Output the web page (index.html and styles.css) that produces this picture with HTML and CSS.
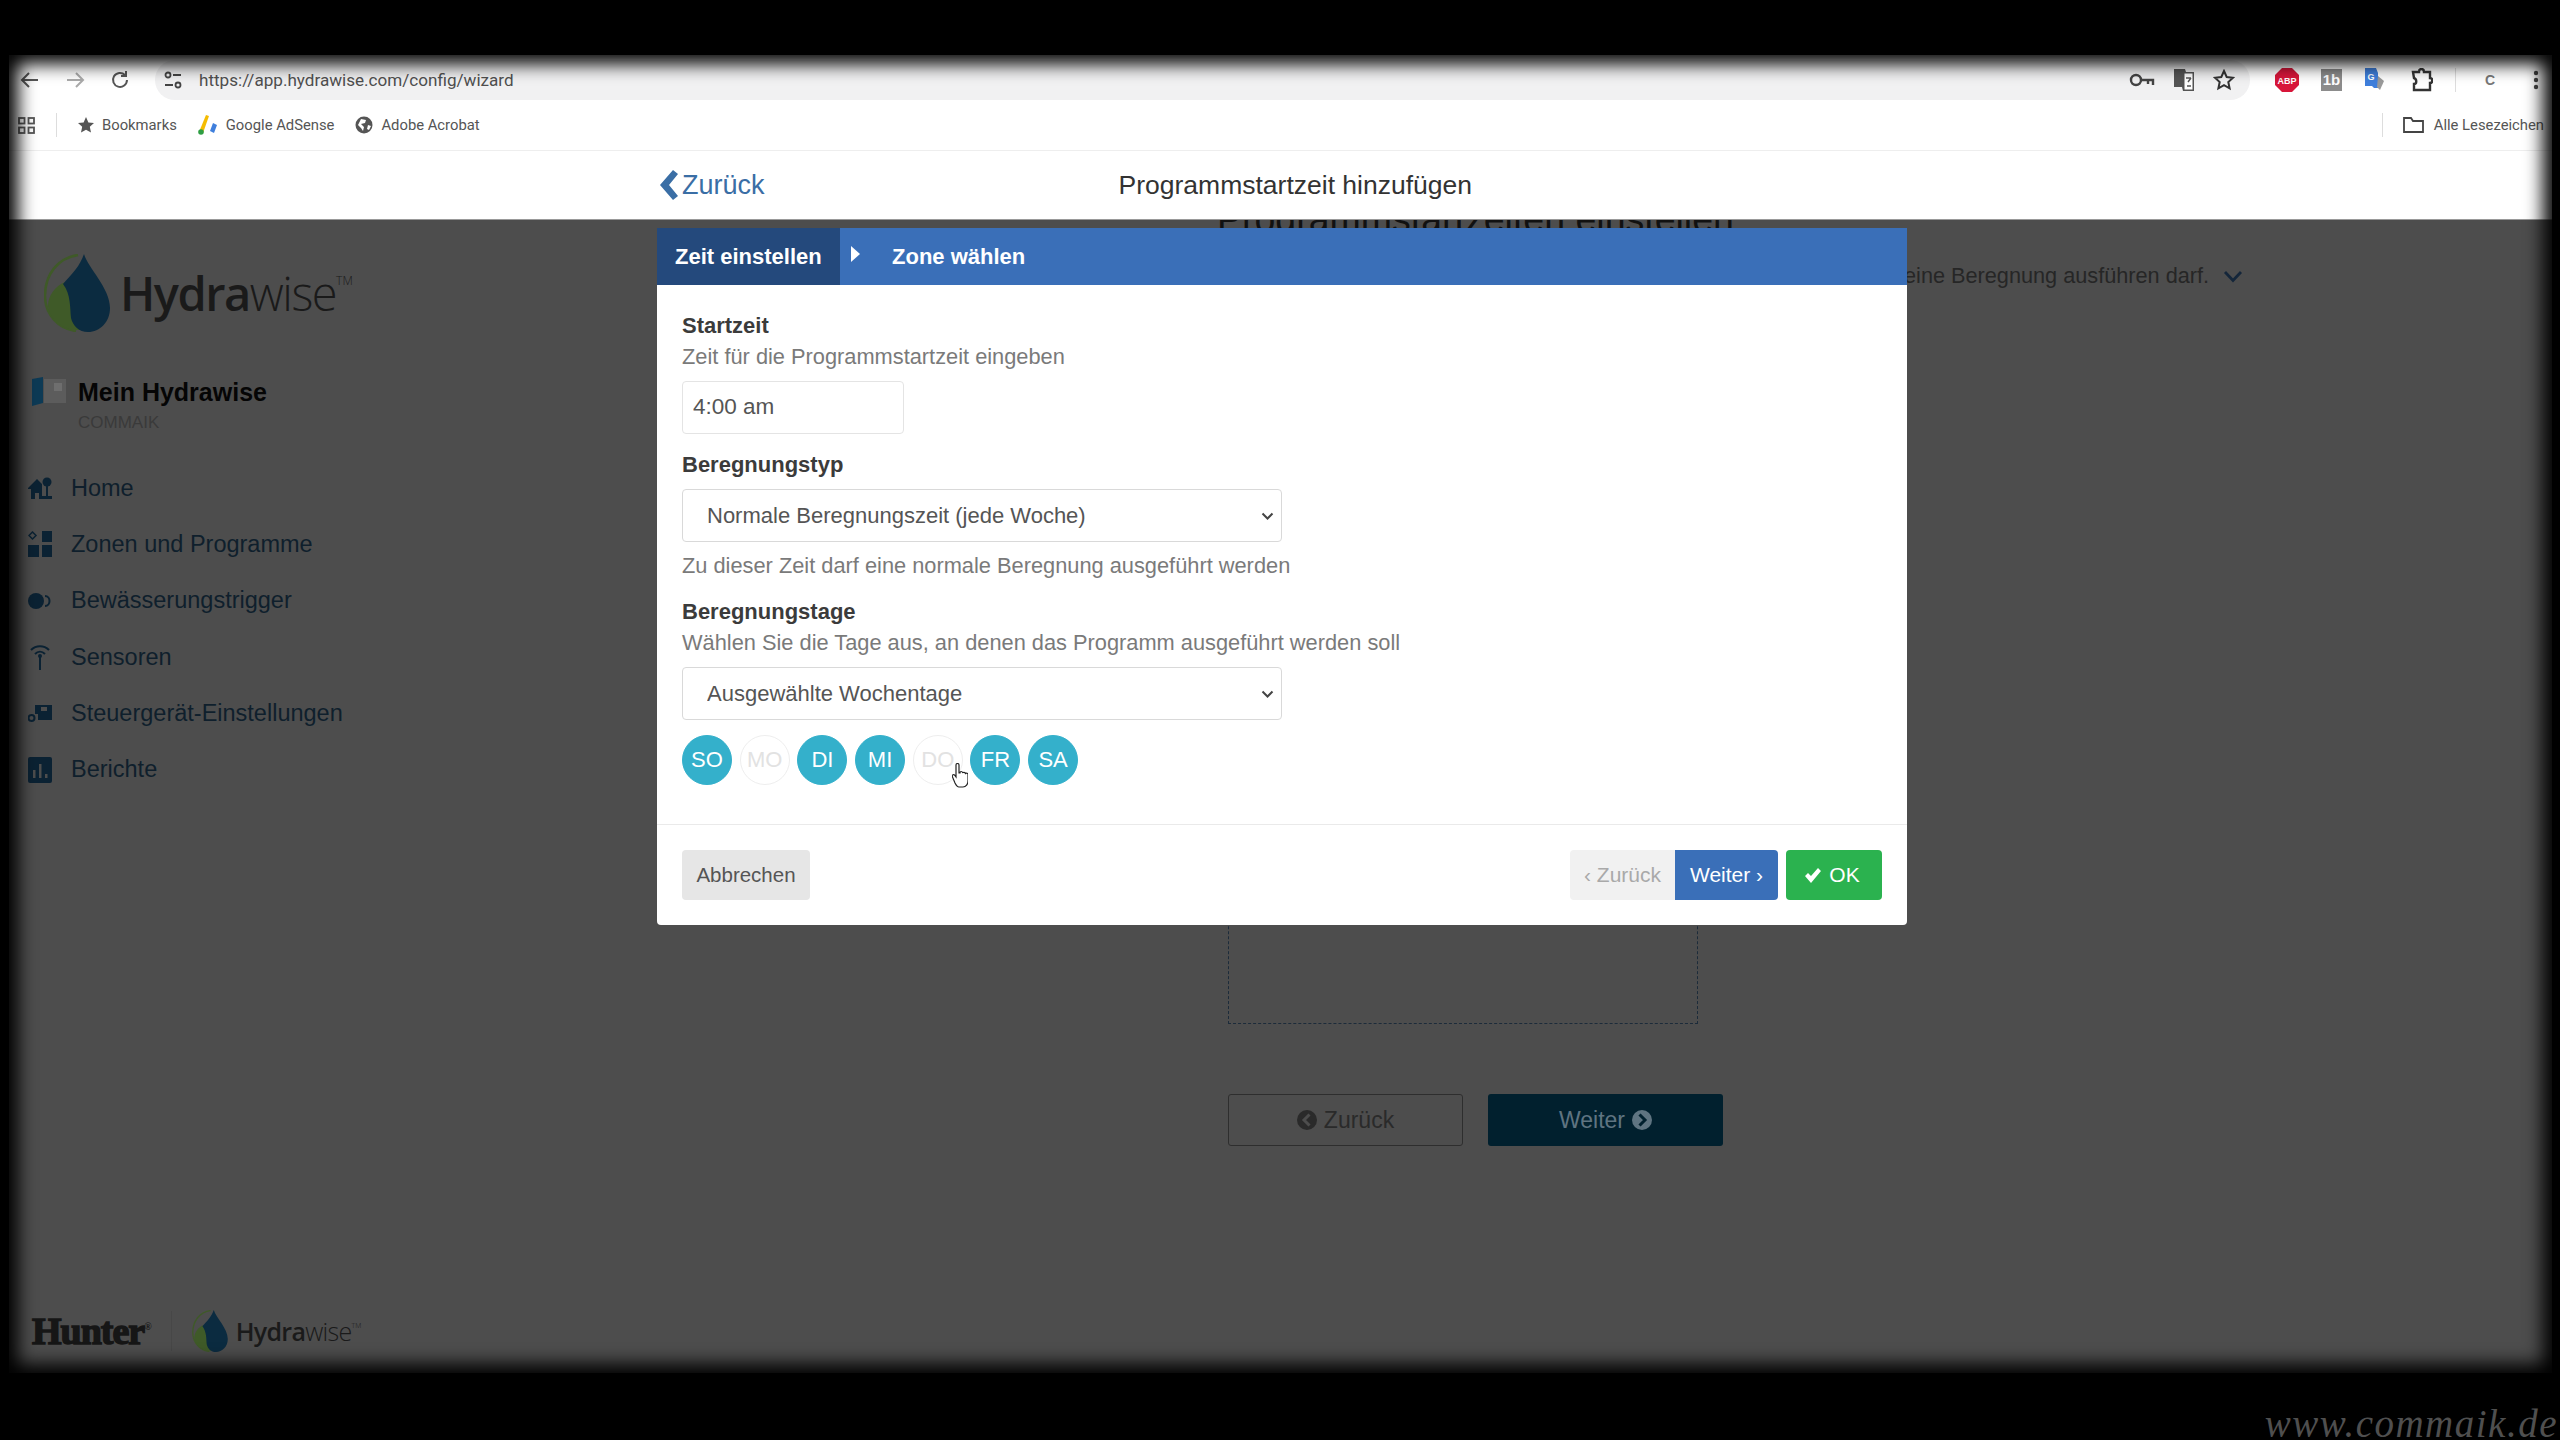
FILE: index.html
```html
<!DOCTYPE html>
<html lang="de">
<head>
    <meta charset="UTF-8">
    <title>Programmstartzeit hinzufügen</title>
    <link rel="stylesheet" href="styles.css">
</head>
<body>
<svg class="defs" width="0" height="0">
    <symbol id="drop" viewBox="0 0 66 78">
        <path d="M34 1C14 4 1 20 1 42c0 18 13 33 31 35" fill="none" stroke="#3f5a28" stroke-width="2.5"/>
        <path d="M4 52c0-10 7-20 17-24 5 8 5 18 6 26 1 9 3 16 9 22C20 76 6 68 4 52z" fill="#3f5a28"/>
        <path d="M40 0c4 14 26 34 26 54 0 14-10 24-22 24-9 0-15-6-17-14-1-9 0-24-8-34C28 20 36 12 40 0z" fill="#0b2b40"/>
    </symbol>
</svg>

<div class="stage">
    <div class="screen">

        <!-- Browser toolbar -->
        <div class="toolbar">
            <div class="nav-btns">
                <svg width="22" height="22" viewBox="0 0 22 22"><path d="M19 11H4M10 4l-7 7 7 7" fill="none" stroke="#555" stroke-width="2"/></svg>
                <svg width="22" height="22" viewBox="0 0 22 22"><path d="M3 11h15M12 4l7 7-7 7" fill="none" stroke="#aaa" stroke-width="2"/></svg>
                <svg width="22" height="22" viewBox="0 0 22 22"><path d="M18 11a7 7 0 1 1-2-5M17 2v5h-5" fill="none" stroke="#555" stroke-width="2"/></svg>
            </div>
            <div class="omnibox">
                <svg width="20" height="20" viewBox="0 0 20 20"><circle cx="5" cy="5" r="2.5" fill="none" stroke="#444" stroke-width="1.8"/><path d="M10 5h8M2 15h8" stroke="#444" stroke-width="2"/><circle cx="15" cy="15" r="2.5" fill="none" stroke="#444" stroke-width="1.8"/></svg>
                <span class="url">https://app.hydrawise.com/config/wizard</span>
                <div class="omni-icons">
                    <svg width="26" height="16" viewBox="0 0 26 16"><circle cx="7" cy="8" r="5" fill="none" stroke="#444" stroke-width="2.4"/><path d="M12 8h12v5M19 8v4" fill="none" stroke="#444" stroke-width="2.4"/></svg>
                    <svg width="22" height="24" viewBox="0 0 22 24"><path d="M1 1h11l1 3h8v19H10l-1-4H1z" fill="#555"/><path d="M11 5h9v17h-9z" fill="#fff" stroke="#555"/><path d="M13 10h5M15 14l3-4M14 18h4" stroke="#555" stroke-width="1.4"/></svg>
                    <svg width="22" height="22" viewBox="0 0 22 22"><path d="M11 2l2.700 6 6.300.7-4.700 4.300 1.300 6.400L11 16.200 5.400 19.400l1.300-6.400L2 8.700 8.300 8z" fill="none" stroke="#333" stroke-width="2"/></svg>
                </div>
            </div>
            <div class="ext-icons">
                <svg class="ext-abp" width="24" height="24" viewBox="0 0 24 24"><path d="M7 0h10l7 7v10l-7 7H7l-7-7V7z" fill="#d8163a"/><text x="12" y="16" text-anchor="middle" class="ext-text">ABP</text></svg>
                <svg class="ext-fb" width="21" height="22" viewBox="0 0 21 22"><path d="M0 0h21v22H0z" fill="#8c8c8c"/><text x="10.500" y="16" text-anchor="middle" class="ext-text ext-text-big">1b</text></svg>
                <svg class="ext-g" width="20" height="24" viewBox="0 0 20 24"><path d="M0 0h11l2 5v15H9l-2-2H0z" fill="#3f7fdc"/><path d="M13 8l6 5-4 9-3-3z" fill="#9a9a9a"/><text x="6" y="12" text-anchor="middle" class="ext-text">G</text></svg>
                <svg class="ext-puzzle" width="22" height="24" viewBox="0 0 22 24"><path d="M2 4h6c0-4 5-4 5 0h6v6c3 0 3 5 0 5v7H3v-6c3 0 3-5 0-6z" fill="none" stroke="#333" stroke-width="2.400"/></svg>
                <span class="toolbar-sep"></span>
                <span class="profile">C</span>
                <svg class="ext-dots" width="6" height="20" viewBox="0 0 6 20"><circle cx="3" cy="3" r="2.200" fill="#444"/><circle cx="3" cy="10" r="2.200" fill="#444"/><circle cx="3" cy="17" r="2.200" fill="#444"/></svg>
            </div>
        </div>

        <!-- Bookmarks bar -->
        <div class="bookmarks">
            <svg class="apps" width="17" height="17" viewBox="0 0 17 17"><g fill="none" stroke="#555" stroke-width="1.800"><rect x="1" y="1" width="5.500" height="5.500"/><rect x="10.500" y="1" width="5.500" height="5.500"/><rect x="1" y="10.500" width="5.500" height="5.500"/><rect x="10.500" y="10.500" width="5.500" height="5.500"/></g></svg>
            <span class="bm-sep"></span>
            <div class="bm-item">
                <svg width="16" height="16" viewBox="0 0 16 16"><path d="M8 0l2.400 5.400 5.600.6-4.200 3.800 1.200 5.800L8 12.700 3 15.600l1.200-5.800L0 6l5.600-.6z" fill="#555"/></svg>
                Bookmarks
            </div>
            <div class="bm-item">
                <svg width="20" height="22" viewBox="0 0 20 22"><path d="M8 1l3 1-6 17-4-1z" fill="#f5bc00"/><circle cx="3" cy="18" r="2.800" fill="#2f9e44"/><path d="M15 9l4 2-3 8-4-2z" fill="#3f7fdc"/></svg>
                Google AdSense
            </div>
            <div class="bm-item">
                <svg width="18" height="18" viewBox="0 0 18 18"><circle cx="9" cy="9" r="8.500" fill="#555"/><path d="M6 3l5 1-1 3-4 1 3 3-1 4-2-3-3-3zM13 9l3 1-2 4-2-1z" fill="#fff"/></svg>
                Adobe Acrobat
            </div>
            <div class="bm-right">
                <span class="bm-sep bm-sep-right"></span>
                <div class="bm-item bm-all">
                    <svg width="21" height="16" viewBox="0 0 21 16"><path d="M1 1h7l2 3h10v11H1z" fill="none" stroke="#444" stroke-width="1.800"/></svg>
                    Alle Lesezeichen
                </div>
            </div>
        </div>

        <!-- App header -->
        <div class="app-header">
            <a class="back-link">
                <svg width="20" height="30" viewBox="0 0 20 30"><path d="M14 0l5 4-9 11 9 11-5 4L1 15z" fill="#3a6ea5"/></svg>
                Zurück
            </a>
            <h1 class="dialog-title">Programmstartzeit hinzufügen</h1>
        </div>

        <!-- Dimmed page behind the dialog -->
        <div class="page">
            <aside class="sidebar">
                <div class="logo">
                    <svg width="66" height="78"><use href="#drop"/></svg>
                    <span class="logo-text"><b>Hydra</b>wise<sup>TM</sup></span>
                </div>
                <div class="account">
                    <svg width="34" height="30" viewBox="0 0 34 30"><path d="M0 2l11-2v26L0 29z" fill="#0d3a55"/><path d="M12 2h22v24H12z" fill="#5c5c5c"/><path d="M22 6h8v8h-8z" fill="#6e6e6e"/></svg>
                    <div>
                        <div class="account-name">Mein Hydrawise</div>
                        <div class="account-sub">COMMAIK</div>
                    </div>
                </div>
                <ul class="nav">
                    <li><svg width="24" height="24" viewBox="0 0 24 24"><path d="M0 12L9 3l5 5v15h-3v-6H7v6H3V13H0z" fill="#0b2233"/><circle cx="19" cy="6" r="4.500" fill="#0b2233"/><path d="M18 10h2v10h4v3H14v-3h4z" fill="#0b2233"/></svg>Home</li>
                    <li><svg width="24" height="26" viewBox="0 0 24 26"><path d="M4.500 1l3.500 3.500L4.500 8 1 4.500z" fill="none" stroke="#0b2233" stroke-width="1.500"/><path d="M14 0h10v11H14zM0 14h11v12H0zM14 14h10v12H14z" fill="#0b2233"/></svg>Zonen und Programme</li>
                    <li><svg width="24" height="18" viewBox="0 0 24 18"><circle cx="8" cy="9" r="8" fill="#0b2233"/><path d="M17 4c6 0 6 10 0 10" fill="none" stroke="#0b2233" stroke-width="2"/></svg>Bewässerungstrigger</li>
                    <li><svg width="24" height="26" viewBox="0 0 24 26"><g fill="none" stroke="#0b2233" stroke-width="2"><path d="M3 6c5-5 13-5 18 0M7 10c3-3 7-3 10 0"/></g><path d="M11 12h2v14h-2z" fill="#0b2233"/><circle cx="12" cy="12" r="2" fill="#0b2233"/></svg>Sensoren</li>
                    <li><svg width="24" height="20" viewBox="0 0 24 20"><path d="M7 2h17v15H10v-6H7z" fill="#0b2233"/><path d="M13 4h6v4h-6z" fill="#4d4d4d"/><circle cx="3.500" cy="15" r="3" fill="none" stroke="#0b2233" stroke-width="2"/></svg>Steuergerät-Einstellungen</li>
                    <li><svg width="24" height="26" viewBox="0 0 24 26"><rect width="24" height="26" rx="2" fill="#0b2233"/><path d="M5 13h2.500v8H5zM11 7h2.500v14H11zM17 17h2.500v4H17z" fill="#4d4d4d"/></svg>Berichte</li>
                </ul>
                <div class="brand-footer">
                    <span class="hunter">Hunter<sup>®</sup></span>
                    <span class="brand-sep"></span>
                    <svg width="36" height="42"><use href="#drop"/></svg>
                    <span class="logo-text logo-text-small"><b>Hydra</b>wise<sup>TM</sup></span>
                </div>
            </aside>

            <main class="content">
                <h2 class="page-title">Programmstartzeiten einstellen</h2>
                <div class="hint-row">
                    <span>eine Beregnung ausführen darf.</span>
                    <svg width="20" height="13" viewBox="0 0 20 13"><path d="M2 2l8 8.500L18 2" fill="none" stroke="#14263a" stroke-width="2.800"/></svg>
                </div>
                <div class="dropzone"></div>
                <div class="wizard-nav">
                    <button class="page-btn page-btn-back">
                        <svg width="20" height="20" viewBox="0 0 20 20"><circle cx="10" cy="10" r="10" fill="#2a2a2a"/><path d="M12.500 4.500L7 10l5.500 5.500" fill="none" stroke="#4d4d4d" stroke-width="3"/></svg>
                        Zurück
                    </button>
                    <button class="page-btn page-btn-next">
                        Weiter
                        <svg width="20" height="20" viewBox="0 0 20 20"><circle cx="10" cy="10" r="10" fill="#5f7481"/><path d="M7.500 4.500L13 10l-5.500 5.500" fill="none" stroke="#01202e" stroke-width="3"/></svg>
                    </button>
                </div>
            </main>
        </div>

        <!-- Dialog -->
        <div class="modal">
            <div class="steps">
                <div class="step step-active">Zeit einstellen</div>
                <svg class="step-arrow" width="9" height="16" viewBox="0 0 9 16"><path d="M0 0l9 8-9 8z" fill="#fff"/></svg>
                <div class="step">Zone wählen</div>
            </div>
            <div class="modal-body">
                <label class="field-label">Startzeit</label>
                <p class="field-help field-help-tight">Zeit für die Programmstartzeit eingeben</p>
                <input class="time-input" type="text" value="4:00 am">

                <label class="field-label field-label-gap">Beregnungstyp</label>
                <select class="select">
                    <option>Normale Beregnungszeit (jede Woche)</option>
                </select>
                <p class="field-help field-help-after">Zu dieser Zeit darf eine normale Beregnung ausgeführt werden</p>

                <label class="field-label field-label-gap">Beregnungstage</label>
                <p class="field-help field-help-tight">Wählen Sie die Tage aus, an denen das Programm ausgeführt werden soll</p>
                <select class="select">
                    <option>Ausgewählte Wochentage</option>
                </select>

                <div class="days">
                    <span class="day on">SO</span>
                    <span class="day">MO</span>
                    <span class="day on">DI</span>
                    <span class="day on">MI</span>
                    <span class="day">DO</span>
                    <span class="day on">FR</span>
                    <span class="day on">SA</span>
                </div>
            </div>
            <div class="modal-footer">
                <button class="btn btn-cancel">Abbrechen</button>
                <div class="btn-group">
                    <button class="btn btn-prev">‹ Zurück</button>
                    <button class="btn btn-next">Weiter ›</button>
                </div>
                <button class="btn btn-ok">
                    <svg width="18" height="15" viewBox="0 0 18 15"><path d="M1 8l3-3 3 3 7-8 3 3-10 12z" fill="#fff"/></svg>
                    OK
                </button>
            </div>
            <svg class="hand" width="16" height="25" viewBox="0 0 16 25"><path d="M4 2c0-2 3-2 3 0v8l1 0c0-2 2-2 3 0 0-1 2-1 2.500 .5 1-1 2.500 0 2.500 1V18c0 3-2 6-5 6H7c-2 0-3-2-4-4L.5 14c-1-2 1-3 2-2L4 14z" fill="#fff" stroke="#222" stroke-width="1.200"/></svg>
        </div>

        <div class="vignette"></div>
    </div>
    <div class="watermark">www.commaik.de</div>
</div>
</body>
</html>
```
FILE: styles.css
```css
* {
    box-sizing: border-box;
}

html, body {
    margin: 0;
    padding: 0;
    background-color: #000;
}

body {
    font-family: "Liberation Sans", Arial, sans-serif;
    color: #333;
}

.defs {
    display: block;
}

.stage {
    position: relative;
    width: 2560px;
    height: 1440px;
    padding: 55px 8px 67px 9px;
    overflow: hidden;
    background-color: #000;
}

.screen {
    position: relative;
    height: 100%;
    display: flex;
    flex-direction: column;
    overflow: hidden;
    background-color: #fff;
}

.vignette {
    position: absolute;
    inset: 0;
    pointer-events: none;
    box-shadow: inset 0 0 18px 9px #000;
}

.watermark {
    position: absolute;
    right: 2px;
    bottom: 1px;
    font-family: "Liberation Serif", serif;
    font-style: italic;
    font-size: 39px;
    line-height: 30px;
    letter-spacing: 1.500px;
    color: #4f4f4f;
}

/* Browser chrome */
.toolbar {
    height: 45px;
    display: flex;
    align-items: flex-end;
    background-color: #fff;
}

.nav-btns {
    width: 146px;
    height: 40px;
    padding-left: 10px;
    display: flex;
    align-items: center;
    gap: 23px;
    flex-shrink: 0;
}

.omnibox {
    width: 2095px;
    height: 40px;
    padding-left: 8px;
    display: flex;
    align-items: center;
    background-color: #f1f1f2;
    border-radius: 20px;
    flex-shrink: 0;
}

.url {
    margin-left: 16px;
    font-family: Roboto, sans-serif;
    font-size: 17.100px;
    color: #4f4f4f;
}

.omni-icons {
    margin-left: auto;
    margin-right: 15px;
    display: flex;
    align-items: center;
    gap: 18px;
}

.ext-icons {
    flex: 1;
    height: 40px;
    padding-left: 25px;
    display: flex;
    align-items: center;
}

.ext-text {
    font-family: "Liberation Sans", sans-serif;
    font-weight: bold;
    font-size: 9px;
    fill: #fff;
}

.ext-text-big {
    font-size: 15px;
}

.ext-fb {
    margin-left: 22px;
}

.ext-g {
    margin-left: 23px;
}

.ext-puzzle {
    margin-left: 26px;
}

.toolbar-sep {
    width: 1px;
    height: 24px;
    margin-left: 22px;
    background-color: #ddd;
}

.profile {
    width: 22px;
    margin-left: 23px;
    text-align: center;
    font-size: 14px;
    font-weight: bold;
    color: #777;
}

.ext-dots {
    margin-left: 32px;
}

.bookmarks {
    height: 51px;
    padding-left: 9px;
    display: flex;
    align-items: center;
    border-bottom: 1px solid #eee;
    background-color: #fff;
    font-family: Roboto, sans-serif;
    font-size: 14.800px;
    color: #555;
}

.bm-sep {
    width: 1px;
    height: 24px;
    margin-left: 21px;
    background-color: #ddd;
}

.bm-item {
    display: flex;
    align-items: center;
    gap: 8px;
    margin-left: 21px;
}

.bm-right {
    margin-left: auto;
    display: flex;
    align-items: center;
    padding-right: 8px;
}

.bm-sep-right {
    margin: 0;
}

.bm-all {
    gap: 10px;
    margin-left: 20px;
}

.app-header {
    height: 69px;
    display: flex;
    align-items: center;
    border-bottom: 1px solid #999;
    background-color: #fff;
    flex-shrink: 0;
}

.back-link {
    margin-left: 650px;
    display: flex;
    align-items: center;
    gap: 3px;
    font-size: 27px;
    color: #3a6ea5;
}

.dialog-title {
    margin: 0 0 0 354px;
    font-size: 26.500px;
    font-weight: normal;
    color: #333;
}

/* Dimmed page */
.page {
    flex: 1;
    display: flex;
    overflow: hidden;
    background-color: #4d4d4d;
}

.sidebar {
    width: 520px;
    padding: 34px 0 20px 23px;
    display: flex;
    flex-direction: column;
    flex-shrink: 0;
}

.logo {
    margin-left: 12px;
    display: flex;
    align-items: center;
    gap: 10px;
    height: 78px;
}

.logo-text {
    font-family: "Open Sans", sans-serif;
    font-size: 47px;
    font-weight: 300;
    letter-spacing: -1.500px;
    color: #1a1a1a;
}

.logo-text b {
    font-weight: 600;
}

.logo-text sup {
    font-size: 12px;
    letter-spacing: 0;
    vertical-align: 26px;
    line-height: 0;
}

.logo-text-small {
    margin-left: 8px;
    font-size: 25px;
    letter-spacing: -.7px;
}

.logo-text-small sup {
    font-size: 7px;
    vertical-align: 13px;
}

.account {
    margin-top: 45px;
    display: flex;
    gap: 12px;
    align-items: flex-start;
}

.account-name {
    font-size: 25px;
    font-weight: bold;
    line-height: 30px;
    color: #050505;
}

.account-sub {
    margin-top: 6px;
    font-size: 17px;
    line-height: 20px;
    color: #3a3a3a;
}

.nav {
    margin: 27px 0 0;
    padding: 0;
    list-style: none;
    font-size: 23.500px;
    color: #0f1f2c;
}

.nav li {
    height: 56.300px;
    display: flex;
    align-items: center;
    gap: 19px;
    margin-left: -4px;
}

.brand-footer {
    margin-top: auto;
    display: flex;
    align-items: center;
}

.hunter {
    font-family: "Liberation Serif", serif;
    font-weight: bold;
    font-size: 38px;
    letter-spacing: -1px;
    color: #161616;
    -webkit-text-stroke: 1.5px #161616;
}

.hunter sup {
    font-size: 10px;
    line-height: 0;
    -webkit-text-stroke: 0;
}

.brand-sep {
    width: 1px;
    height: 40px;
    margin: 0 20px 0 20px;
    background-color: #474747;
}

.content {
    flex: 1;
    padding-left: 688px;
}

.page-title {
    margin: -22px 0 0;
    font-size: 37.500px;
    line-height: 42px;
    font-weight: normal;
    color: #111;
}

.hint-row {
    margin: 23px 0 0 687px;
    display: flex;
    align-items: center;
    gap: 14px;
    font-size: 21.700px;
    white-space: nowrap;
    color: #262626;
}

.dropzone {
    width: 470px;
    height: 342px;
    margin: 393px 0 0 11px;
    border: 1px dashed #1c2b3a;
}

.wizard-nav {
    margin: 70px 0 0 11px;
    display: flex;
    gap: 25px;
}

.page-btn {
    width: 235px;
    height: 52px;
    display: flex;
    align-items: center;
    justify-content: center;
    gap: 7px;
    border-radius: 3px;
    font-family: inherit;
    font-size: 23px;
}

.page-btn-back {
    border: 1px solid #2e2e2e;
    background: transparent;
    color: #2a2a2a;
}

.page-btn-next {
    border: none;
    background-color: #01202e;
    color: #5f7481;
}

/* Dialog */
.modal {
    position: absolute;
    top: 173px;
    left: 648px;
    width: 1250px;
    height: 697px;
    display: flex;
    flex-direction: column;
    border-radius: 0 0 4px 4px;
    background-color: #fff;
}

.steps {
    height: 57px;
    display: flex;
    align-items: center;
    background-color: #3a6fb8;
    font-size: 22px;
    font-weight: bold;
    color: #fff;
    flex-shrink: 0;
}

.step {
    padding: 0 18px;
}

.step-active {
    width: 183px;
    height: 100%;
    display: flex;
    align-items: center;
    background-color: #24497c;
    white-space: nowrap;
}

.step-arrow {
    margin: -6px 0 0 11px;
}

.step-arrow + .step {
    padding-left: 32px;
}

.modal-body {
    height: 540px;
    padding: 26px 25px 0;
    border-bottom: 1px solid #eaeaea;
    flex-shrink: 0;
}

.field-label {
    display: block;
    font-size: 22px;
    font-weight: bold;
    line-height: 30px;
    color: #3b3b3b;
}

.field-label-gap {
    margin-top: 16px;
}

.field-help {
    margin: 0;
    font-size: 21.800px;
    line-height: 30px;
    color: #7a7a7a;
}

.field-help-tight {
    margin-top: 1px;
}

.field-help-after {
    margin-top: 9px;
}

.time-input {
    display: block;
    width: 222px;
    height: 53px;
    margin-top: 9px;
    padding: 0 10px 2px;
    border: 1px solid #e4e4e4;
    border-radius: 4px;
    font-family: inherit;
    font-size: 22.500px;
    color: #555;
}

.select {
    display: block;
    width: 600px;
    height: 53px;
    margin-top: 9px;
    padding: 0 0 0 24px;
    border: 1px solid #d9d9d9;
    border-radius: 4px;
    appearance: none;
    background: #fff url("data:image/svg+xml,%3Csvg xmlns='http://www.w3.org/2000/svg' width='13' height='8'%3E%3Cpath d='M1.500 1.500l5 5 5-5' fill='none' stroke='%23444' stroke-width='2'/%3E%3C/svg%3E") no-repeat right 7px center;
    font-family: inherit;
    font-size: 22px;
    color: #555;
}

.days {
    margin-top: 15px;
    display: flex;
    gap: 7.700px;
}

.day {
    width: 50px;
    height: 50px;
    display: flex;
    align-items: center;
    justify-content: center;
    border: 1px solid #eee;
    border-radius: 50%;
    font-size: 22px;
    color: #e2e2e2;
}

.day.on {
    border-color: #34b0cb;
    background-color: #34b0cb;
    color: #fff;
}

.modal-footer {
    flex: 1;
    padding: 0 25px;
    display: flex;
    align-items: center;
}

.btn {
    height: 50px;
    padding: 0;
    border: none;
    border-radius: 4px;
    font-family: inherit;
    font-size: 21px;
}

.btn-cancel {
    width: 128px;
    background-color: #e6e6e6;
    font-size: 20.500px;
    color: #555;
}

.btn-group {
    margin-left: auto;
    display: flex;
}

.btn-prev {
    width: 105px;
    border-radius: 4px 0 0 4px;
    background-color: #f1f1f1;
    color: #a9a9a9;
}

.btn-next {
    width: 103px;
    border-radius: 0 4px 4px 0;
    background-color: #3a6fb8;
    color: #fff;
}

.btn-ok {
    width: 96px;
    margin-left: 8px;
    padding-right: 4px;
    display: flex;
    align-items: center;
    justify-content: center;
    gap: 7px;
    background-color: #2bb24f;
    color: #fff;
}

.hand {
    position: absolute;
    top: 535px;
    left: 295px;
}
```
